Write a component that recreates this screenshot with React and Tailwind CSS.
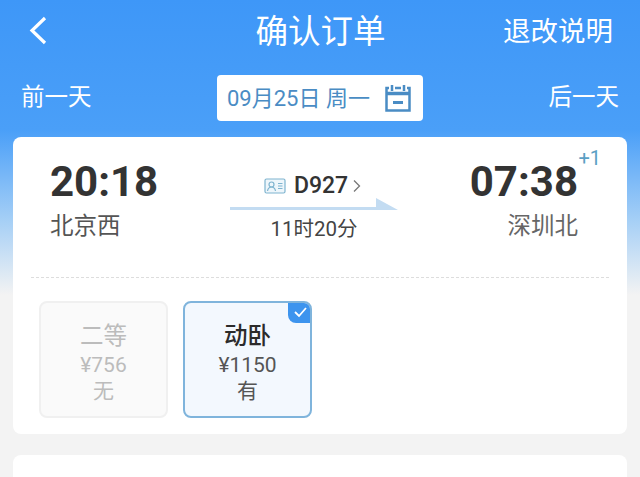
import React from 'react';

const CJK = "font-['Roboto','Noto_Sans_CJK_SC',sans-serif]";

const SeatCard = ({ name, price, stock, active }) => (
  <div
    className={
      active
        ? 'relative flex h-[117px] w-[129px] flex-col items-center overflow-hidden rounded-lg border-2 border-[#7fb4dc] bg-[#f3f8fe] pt-[17px] text-[#555]'
        : 'relative flex h-[117px] w-[129px] flex-col items-center rounded-lg border-2 border-[#f0f0f0] bg-[#fafafa] pt-[17px] text-[#bcbcbc]'
    }
  >
    <div className={active ? 'text-[23.500px] leading-[32px] font-medium text-[#2b2b2b]' : 'text-[23.500px] leading-[32px]'}>{name}</div>
    <div className="text-[21px] leading-[26px]">{price}</div>
    <div className="text-[21px] leading-[26px]">{stock}</div>
    {active && (
      <div className="absolute -top-0.5 -right-0.5 flex h-[22px] w-[24px] items-center justify-center rounded-bl-lg bg-[#3d94ee]">
        <svg width="15" height="12" viewBox="0 0 15 12" fill="none" stroke="white" strokeWidth="1.8">
          <path d="M2 6l4 4 7-8" />
        </svg>
      </div>
    )}
  </div>
);

export default function App() {
  return (
    <div className={`${CJK} h-[477px] w-[640px] overflow-hidden bg-[#f3f3f3] bg-[linear-gradient(#3e97f8_0px,#4a9ff8_130px,#a5cff6_220px,#f3f3f3_295px)]`}>
      {/* header */}
      <div className="grid h-[64px] grid-cols-[1fr_auto_1fr] items-center pr-[27px] pl-[28px] text-white">
        <svg className="mt-[-4px]" width="20" height="30" viewBox="0 0 20 30" fill="none" stroke="white" strokeWidth="3.2">
          <path d="M17 3L4 15.500 17 28" />
        </svg>
        <div className="text-[32.500px] leading-[40px]">确认订单</div>
        <div className="text-right text-[27.500px] leading-[36px]">退改说明</div>
      </div>

      {/* date row */}
      <div className="mt-[11px] flex h-[46px] items-center justify-between px-[21px] text-[23.500px] text-white">
        <span>前一天</span>
        <div className="flex h-[46px] w-[206px] items-center rounded bg-white pl-[10px] text-[#4a8cc4]">
          <span className="text-[22px]">09月25日 周一</span>
          <svg className="ml-[14px]" width="28" height="30" viewBox="0 0 28 30" fill="none" stroke="#4a8cc4" strokeWidth="2.500">
            <path d="M8 2v6M20 2v6M11 5h6M5 5H2.500v22.500h23V5H23" />
            <path d="M2.500 10.500h23" strokeWidth="3.500" />
            <path d="M9 19.500h10" strokeWidth="3" />
          </svg>
        </div>
        <span>后一天</span>
      </div>

      {/* train card */}
      <div className="mx-[13px] mt-[16px] h-[297px] rounded-lg bg-white px-[18px]">
        <div className="relative flex h-[141px] justify-between border-b border-dashed border-[#dddddd] pr-[31px] pl-[19px]">
          <div className="w-[107px] pt-[18px]">
            <div className="text-[42px] leading-[54px] font-bold text-[#333]">20:18</div>
            <div className="mt-[1px] text-[23.500px] leading-[32px] text-[#555]">北京西</div>
          </div>

          <div className="flex w-[170px] flex-col items-center pt-[34px]">
            <div className="ml-[-3px] flex h-[30px] items-center">
              <svg width="22" height="16" viewBox="0 0 22 16" fill="none" stroke="#7fb4cf" strokeWidth="1.200">
                <rect x="1" y="1" width="20" height="14" rx="1.500" fill="#eef6fb" />
                <circle cx="7.500" cy="6.500" r="2.500" />
                <path d="M3.500 13c.5-3 2-4 4-4s3.500 1 4 4M14 5.500h4.500M14 8h4.500M14 10.500h4.500" />
              </svg>
              <span className="ml-2 text-[23px] font-medium text-[#333]">D927</span>
              <svg className="ml-[5px]" width="8" height="14" viewBox="0 0 8 14" fill="none" stroke="#777" strokeWidth="1.300">
                <path d="M1 1.500L6.500 7 1 12.500" />
              </svg>
            </div>
            <svg className="mt-[-3px]" width="170" height="14" viewBox="0 0 170 14">
              <path d="M1 9h146V0l22 12H1z" fill="#c3dcf2" />
            </svg>
            <div className="mt-[4px] text-[20.500px] leading-[26px] text-[#444]">11时20分</div>
          </div>

          <div className="flex w-[107px] flex-col items-end pt-[18px]">
            <div className="text-[42px] leading-[54px] font-bold text-[#333]">07:38</div>
            <div className="mt-[1px] text-[23.500px] leading-[32px] text-[#666]">深圳北</div>
          </div>
          <div className="absolute top-[9px] right-[8px] text-[20px] leading-[24px] text-[#5b9fc4]">+1</div>
        </div>

        <div className="mt-[23px] flex gap-[15px] pl-[8px]">
          <SeatCard name="二等" price="¥756" stock="无" />
          <SeatCard name="动卧" price="¥1150" stock="有" active />
        </div>
      </div>

      {/* next section */}
      <div className="mx-[13px] mt-[21px] h-[60px] rounded-t-lg bg-white" />
    </div>
  );
}
